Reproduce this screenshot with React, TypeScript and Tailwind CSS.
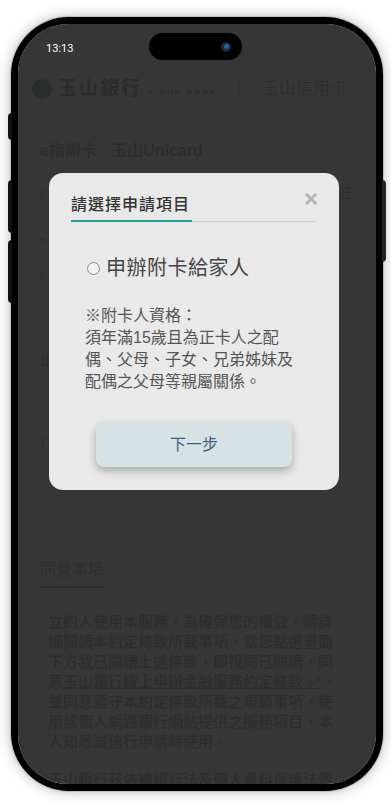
import React from "react";

const cjk = { fontFamily: '"Liberation Sans", "Noto Sans CJK TC", sans-serif' };

const PageBehind = () => (
    <div className="flex flex-col bg-white text-[#d6d6d6]" style={cjk}>
        <div className="h-[38px]" />
        <div className="flex items-center h-[55px] pl-[14px] gap-[6px] border-b border-[#f2f2f2]">
            <div className="w-[20px] h-[20px] rounded-full bg-[#c6d3d1]" />
            <span className="text-[19px] font-bold text-[#c9d4d2] tracking-[2px]">玉山銀行</span>
            <span className="text-[8px] font-bold tracking-[2px] text-[#c9d4d2] mt-[6px]">E.SUN BANK</span>
            <span className="mx-[14px] text-[#e4e4e4]">|</span>
            <span className="text-[17px] text-[#d8d8d8]">玉山信用卡</span>
        </div>
        <div className="px-[22px] pt-[22px]">
            <div className="text-[16px] font-bold leading-[24px] text-[#d4d4d4]">e指辦卡 - 玉山Unicard</div>
            <div className="mt-[20px] flex justify-between text-[14px] text-[#dadada]">
                <span>r 申請人基本資料</span>
                <span>正</span>
            </div>
            <div className="mt-[28px] text-[14px] text-[#dccfbe]">* 請填寫以下資料</div>
            <div className="mt-[16px] text-[14px] text-[#dadada]">I 身分證字號</div>
            <div className="mt-[12px] h-[36px] border border-[#eee] rounded" />
            <div className="mt-[12px] text-[14px] text-[#dadada]">出生年月日</div>
            <div className="mt-[12px] h-[36px] border border-[#eee] rounded" />
            <div className="mt-[12px] text-[14px] text-[#dadada]">行動電話</div>
            <div className="mt-[12px] h-[36px] border border-[#eee] rounded" />
        </div>
        <div className="px-[22px] mt-[58px]">
            <div className="inline-block text-[16px] leading-[24px] text-[#d4d4d4] pb-[4px] border-b-2 border-[#cddad8]">同意事項</div>
        </div>
        <div className="px-[30px] mt-[24px] text-[15px] leading-[20px] text-[#d2d2d2] font-medium">
            <p>
                立約人使用本服務，為確保您的權益，請詳細閱讀本約定條款所載事項，當您點選畫面下方我已閱讀上述條款，即視同已閱讀，同意<span className="underline">玉山銀行線上申辦金融服務約定條款 ↗</span>，並同意遵守本約定條款所載之規範事項，使用該個人網路銀行網站提供之服務項目，本人知悉誠信行申請時使用。
            </p>
            <p className="mt-[18px]">
                玉山銀行茲依據銀行法及個人資料保護法等相關法令之規定，說明玉山銀行蒐集、處理、利用及國際傳輸您的個人資料。
            </p>
        </div>
    </div>
);

const Modal = () => (
    <div className="absolute left-[31px] top-[149px] w-[290px] h-[317px] rounded-[14px] bg-[#e9e9e9] px-[22px] pt-[20px]" style={cjk}>
        <button className="absolute right-[21px] top-[16px] text-[#b3b3b3] text-[24px] leading-[20px] font-bold">×</button>
        <div className="text-[16px] leading-[24px] font-medium text-[#333] tracking-[1px]">請選擇申請項目</div>
        <div className="mt-[3px] h-[2px] flex">
            <div className="w-[121px] h-[2px] bg-[#2aa198]" />
            <div className="flex-1 h-[1px] mt-[1px] bg-[#cfcfcf]" />
        </div>
        <label className="mt-[32px] ml-[16px] flex items-center gap-[6px] h-[28px]">
            <span className="w-[13px] h-[13px] rounded-full border border-[#8a8a8a] bg-[#f2f2f2]" />
            <span className="text-[20px] leading-[28px] text-[#444] tracking-[0.5px]">申辦附卡給家人</span>
        </label>
        <div className="mt-[23px] ml-[14px] text-[16px] leading-[22px] text-[#555]">
            ※附卡人資格：<br />
            須年滿15歲且為正卡人之配<br />
            偶、父母、子女、兄弟姊妹及<br />
            配偶之父母等親屬關係。
        </div>
        <div className="mt-[29px] flex">
            <button className="ml-[25px] w-[196px] h-[45px] rounded-[8px] bg-[#d6e2e3] text-[16px] text-[#3a5f82] shadow-[0_4px_8px_rgba(0,0,0,0.28)]">
                下一步
            </button>
        </div>
    </div>
);

export default function App() {
    return (
        <div className="w-[391px] h-[811px] bg-white overflow-hidden relative">
            <div className="absolute left-[8px] top-[113px] w-[4px] h-[27px] rounded-l bg-[#111]" />
            <div className="absolute left-[8px] top-[180px] w-[4px] h-[53px] rounded-l bg-[#111]" />
            <div className="absolute left-[8px] top-[240px] w-[4px] h-[63px] rounded-l bg-[#111]" />
            <div className="absolute left-[382px] top-[180px] w-[4px] h-[82px] rounded-r bg-[#222]" />
            <div className="ml-[11px] mt-[17px] w-[372px] h-[774px] rounded-[58px] bg-black p-[7px] shadow-[0_0_14px_rgba(0,0,0,0.3)] ring-1 ring-[#bdbdbd]">
                <div className="relative w-[358px] h-[760px] rounded-[50px] overflow-hidden">
                    <PageBehind />
                    <div className="absolute inset-0 bg-[rgba(0,0,0,0.79)]" />
                    <div className="absolute left-[28px] top-[17px] text-[11px] text-white" style={{ fontFamily: 'Roboto, sans-serif' }}>13:13</div>
                    <div className="absolute left-[131px] top-[9px] w-[93px] h-[27px] rounded-full bg-black flex items-center justify-end pr-[11px]">
                        <div className="w-[10px] h-[10px] rounded-full bg-[#1d2a3a] flex items-center justify-center">
                            <div className="w-[5px] h-[5px] rounded-full bg-[#2b5fa8]" />
                        </div>
                    </div>
                    <Modal />
                </div>
            </div>
        </div>
    );
}
